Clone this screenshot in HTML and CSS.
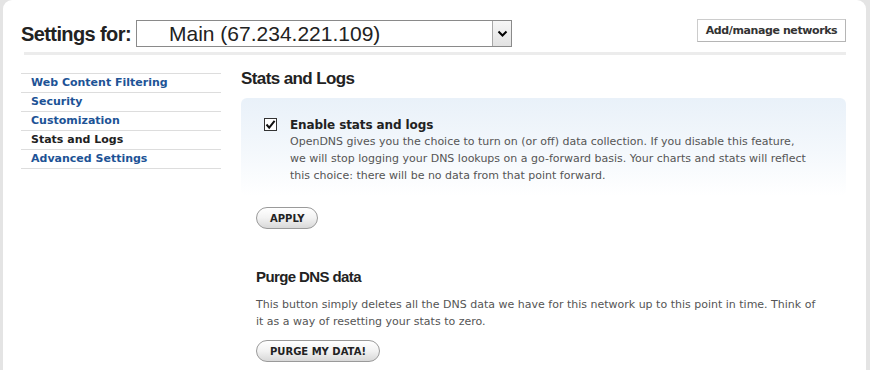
FILE: index.html
```html
<!DOCTYPE html>
<html lang="en">
<head>
    <meta charset="UTF-8">
    <title>Settings - Stats and Logs</title>
    <link rel="stylesheet" href="styles.css">
</head>
<body>
    <div class="page">
        <header class="top-bar">
            <h1>Settings for:</h1>
            <div class="network-select">
                <span class="network-name">Main (67.234.221.109)</span>
                <span class="select-arrow">
                    <svg width="11" height="8" viewBox="0 0 11 8"><path d="M1.5 1.5 L5.5 5.5 L9.5 1.5" fill="none" stroke="#000" stroke-width="2"/></svg>
                </span>
            </div>
            <button class="btn-flat">Add/manage networks</button>
        </header>
        <div class="rule"></div>

        <div class="content">
            <ul class="side-nav">
                <li><a href="#">Web Content Filtering</a></li>
                <li><a href="#">Security</a></li>
                <li><a href="#">Customization</a></li>
                <li class="current">Stats and Logs</li>
                <li><a href="#">Advanced Settings</a></li>
            </ul>

            <main class="main">
                <h2>Stats and Logs</h2>
                <div class="option-box">
                    <label class="option">
                        <span class="checkbox">
                            <svg width="11" height="11" viewBox="0 0 11 11"><path d="M1.5 5.5 L4.2 8.6 L9.6 1.8" fill="none" stroke="#111" stroke-width="2"/></svg>
                        </span>
                        <span class="option-text">
                            <strong>Enable stats and logs</strong>
                            <span class="desc">OpenDNS gives you the choice to turn on (or off) data collection. If you disable this feature,<br>
                                we will stop logging your DNS lookups on a go-forward basis. Your charts and stats will reflect<br>
                                this choice: there will be no data from that point forward.</span>
                        </span>
                    </label>
                </div>
                <div class="section">
                    <button class="btn-pill">APPLY</button>
                </div>

                <div class="section purge">
                    <h3>Purge DNS data</h3>
                    <p class="desc">This button simply deletes all the DNS data we have for this network up to this point in time. Think of it as a way of resetting your stats to zero.</p>
                    <button class="btn-pill">PURGE MY DATA!</button>
                </div>
            </main>
        </div>
    </div>
</body>
</html>
```

FILE: styles.css
```css
* {
    margin: 0;
    padding: 0;
    box-sizing: border-box;
}

body {
    background-color: #e4e4e4;
    font-family: 'DejaVu Sans', Verdana, sans-serif;
    font-size: 11px;
    color: #333;
    height: 370px;
    overflow: hidden;
}

.page {
    margin-left: 3px;
    width: 863px;
    min-height: 370px;
    background-color: #fff;
    border-radius: 9px 9px 0 0;
    padding: 19px 20px 0 18px;
}

/* header */
.top-bar {
    display: flex;
    align-items: flex-start;
    height: 30px;
}

h1 {
    flex: none;
    width: 115px;
    font-family: 'Liberation Sans', Arial, sans-serif;
    font-size: 20px;
    font-weight: bold;
    color: #222;
    margin-top: 4px;
    letter-spacing: -0.6px;
    white-space: nowrap;
}

.network-select {
    display: flex;
    align-items: center;
    width: 376px;
    height: 27px;
    margin-top: 1px;
    border: 1px solid #8a8a8a;
    background: #fff;
}

.network-name {
    flex: 1;
    padding-left: 32px;
    font-family: 'Liberation Sans', Arial, sans-serif;
    font-size: 21px;
    color: #222;
}

.select-arrow {
    display: flex;
    align-items: center;
    justify-content: center;
    width: 19px;
    height: 25px;
    background: linear-gradient(#f6f6f6, #e2e2e2);
    border-left: 1px solid #a8a8a8;
}

.btn-flat {
    margin-left: auto;
    width: 149px;
    height: 23px;
    font-family: 'DejaVu Sans', Verdana, sans-serif;
    font-size: 11px;
    font-weight: bold;
    letter-spacing: -0.4px;
    color: #333;
    background: #fff;
    border: 1px solid #ccc;
    border-right-color: #b5b5b5;
    border-bottom-color: #b5b5b5;
}

.rule {
    height: 3px;
    margin: 3px 0 0 3px;
    background-color: #ececec;
}

.content {
    display: flex;
    gap: 20px;
    margin-top: 18px;
}

/* sidebar */
.side-nav {
    list-style: none;
    width: 200px;
    border-top: 1px solid #ddd;
}

.side-nav li {
    height: 19px;
    line-height: 18px;
    padding-left: 10px;
    border-bottom: 1px solid #ddd;
    font-weight: bold;
    color: #222;
}

.side-nav a {
    color: #1d5396;
    text-decoration: none;
}

/* main column */
.main {
    flex: 1;
}

h2 {
    font-family: 'Liberation Sans', Arial, sans-serif;
    font-size: 17px;
    font-weight: bold;
    color: #222;
    letter-spacing: -0.6px;
    margin-top: -4px;
    line-height: 20px;
}

.option-box {
    margin-top: 9px;
    height: 98px;
    border-radius: 6px;
    background: linear-gradient(#e9f1f9, #f4f8fc 55%, #fff);
    padding: 19px 25px 0 23px;
}

.option {
    display: flex;
    gap: 13px;
}

.checkbox {
    display: flex;
    align-items: center;
    justify-content: center;
    flex: none;
    width: 13px;
    height: 13px;
    margin-top: 1px;
    border: 1px solid #333;
    background: #fff;
}

.option-text strong {
    display: block;
    font-size: 12px;
    letter-spacing: -0.1px;
    color: #222;
    line-height: 16px;
}

.desc {
    display: block;
    color: #555;
    line-height: 17px;
}

.section {
    padding-left: 15px;
}

.btn-pill {
    height: 22px;
    padding: 0 13px;
    font-family: 'DejaVu Sans', Verdana, sans-serif;
    font-size: 10px;
    font-weight: bold;
    color: #222;
    background: linear-gradient(#fff, #f2f2f2 50%, #d8d8d8);
    border: 1px solid #9a9a9a;
    border-radius: 11px;
}

.section .btn-pill {
    margin-top: 11px;
}

.purge {
    margin-top: 38px;
}

h3 {
    font-family: 'Liberation Sans', Arial, sans-serif;
    font-size: 15px;
    font-weight: bold;
    color: #222;
    letter-spacing: -0.6px;
    line-height: 20px;
}

.purge .desc {
    margin-top: 9px;
    padding-right: 20px;
}

.purge .btn-pill {
    margin-top: 10px;
}
```
